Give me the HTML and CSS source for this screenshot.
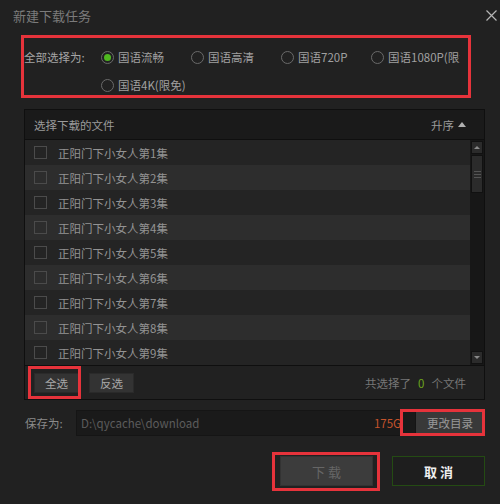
FILE: index.html
```html
<!DOCTYPE html>
<html lang="zh-CN">
<head>
    <meta charset="UTF-8">
    <meta name="viewport" content="width=device-width, initial-scale=1.0">
    <title>新建下载任务</title>
    <link rel="stylesheet" href="styles.css">
</head>
<body>

    <div class="titlebar">
        <span class="title">新建下载任务</span>
        <svg class="close" width="11" height="11" viewBox="0 0 11 11">
            <path d="M0.5 0.5 L10.5 10.5 M10.5 0.5 L0.5 10.5" stroke="#b5b5b5" stroke-width="1.2" fill="none"/>
        </svg>
    </div>

    <div class="quality">
        <span class="q-label">全部选择为:</span>
        <div class="q-options">
            <label class="radio checked"><i></i>国语流畅</label>
            <label class="radio"><i></i>国语高清</label>
            <label class="radio"><i></i>国语720P</label>
            <label class="radio"><i></i>国语1080P(限免)</label>
            <label class="radio"><i></i>国语4K(限免)</label>
        </div>
    </div>

    <div class="files">
        <div class="files-head">
            <span>选择下载的文件</span>
            <span class="sort">升序<i class="tri"></i></span>
        </div>
        <div class="files-body">
            <ul class="file-list">
                <li><i class="check"></i>正阳门下小女人第1集</li>
                <li><i class="check"></i>正阳门下小女人第2集</li>
                <li><i class="check"></i>正阳门下小女人第3集</li>
                <li><i class="check"></i>正阳门下小女人第4集</li>
                <li><i class="check"></i>正阳门下小女人第5集</li>
                <li><i class="check"></i>正阳门下小女人第6集</li>
                <li><i class="check"></i>正阳门下小女人第7集</li>
                <li><i class="check"></i>正阳门下小女人第8集</li>
                <li><i class="check"></i>正阳门下小女人第9集</li>
            </ul>
            <div class="scrollbar">
                <div class="sb-btn up"></div>
                <div class="sb-thumb"><i></i><i></i><i></i></div>
                <div class="sb-track"></div>
                <div class="sb-btn down"></div>
            </div>
        </div>
        <div class="files-foot">
            <button class="btn-small mark mark-all">全选</button>
            <button class="btn-small">反选</button>
            <span class="count">共选择了<em>0</em>个文件</span>
        </div>
    </div>

    <div class="save">
        <span class="save-label">保存为:</span>
        <div class="path">
            <span>D:\qycache\download</span>
            <span class="free">175G</span>
        </div>
        <button class="change mark mark-change">更改目录</button>
    </div>

    <div class="actions">
        <button class="dl mark mark-dl">下 载</button>
        <button class="cancel">取 消</button>
    </div>

</body>
</html>
```

FILE: styles.css
```css
*{
    margin: 0;
    padding: 0;
    box-sizing: border-box;
}
body{
    width: 500px;
    height: 504px;
    overflow: hidden;
    background-color: #212121;
    font-family: "Noto Sans CJK SC", "Noto Sans", sans-serif;
    font-size: 11.5px;
    color: #999;
}
button{
    font-family: inherit;
    font-size: inherit;
    cursor: pointer;
}

/* title bar */
.titlebar{
    height: 30px;
    display: flex;
    align-items: center;
    justify-content: space-between;
    padding: 0 3px 0 13px;
}
.title{
    font-size: 13px;
    color: #7b7b7b;
}

/* quality picker */
.quality{
    margin: 5px 0 0 21px;
    width: 450px;
    height: 63px;
    border: 3px solid #e6333b;
    display: flex;
    padding-top: 9px;
}
.q-label{
    width: 77px;
    line-height: 20px;
    color: #a5a5a5;
}
.q-options{
    display: grid;
    grid-template-columns: repeat(4, 90px);
    grid-auto-rows: 20px;
    row-gap: 8px;
    width: 359px;
    overflow: hidden;
}
.radio{
    display: flex;
    align-items: center;
    gap: 4px;
    white-space: nowrap;
    color: #a0a0a0;
}
.radio i{
    flex: none;
    width: 13px;
    height: 13px;
    border: 1px solid #6a6a6a;
    border-radius: 50%;
    display: flex;
    align-items: center;
    justify-content: center;
}
.radio.checked i::after{
    content: "";
    width: 7px;
    height: 7px;
    border-radius: 50%;
    background-color: #4fb81f;
}

/* file list */
.files{
    margin: 11px 0 0 24px;
    width: 461px;
    border: 1px solid #0f0f0f;
}
.files-head{
    height: 30px;
    border-bottom: 1px solid #0f0f0f;
    background-color: #1a1a1a;
    display: flex;
    align-items: center;
    justify-content: space-between;
    padding: 0 18px 0 9px;
    color: #9a9a9a;
}
.sort{
    display: flex;
    align-items: center;
    gap: 4px;
}
.tri{
    width: 0;
    height: 0;
    border-left: 4px solid transparent;
    border-right: 4px solid transparent;
    border-bottom: 5px solid #b0b0b0;
}
.files-body{
    display: flex;
    height: 225px;
}
.file-list{
    list-style: none;
    flex: 1;
}
.file-list li{
    height: 25px;
    display: flex;
    align-items: center;
    padding-left: 9px;
    background-color: #242424;
    color: #939393;
}
.file-list li:nth-child(even){
    background-color: #2d2d2d;
}
.check{
    width: 13px;
    height: 13px;
    border: 1px solid #4b4b4b;
    margin-right: 11px;
}
.scrollbar{
    width: 14px;
    background-color: #171717;
    display: flex;
    flex-direction: column;
    padding: 1px;
}
.sb-btn{
    height: 13px;
    background-color: #2b2b2b;
    border: 1px solid #111;
    display: flex;
    align-items: center;
    justify-content: center;
}
.sb-btn::after{
    content: "";
    border-left: 3px solid transparent;
    border-right: 3px solid transparent;
}
.sb-btn.up::after{
    border-bottom: 3px solid #8a8a8a;
}
.sb-btn.down::after{
    border-top: 3px solid #8a8a8a;
}
.sb-thumb{
    height: 38px;
    margin-top: 1px;
    background-color: #2b2b2b;
    border: 1px solid #111;
    display: flex;
    flex-direction: column;
    align-items: center;
    justify-content: center;
    gap: 2px;
}
.sb-thumb i{
    width: 7px;
    height: 1px;
    background-color: #555;
}
.sb-track{
    flex: 1;
}
.files-foot{
    height: 34px;
    border-top: 1px solid #0f0f0f;
    display: flex;
    align-items: center;
    gap: 10px;
    padding: 0 18px 0 9px;
}
.btn-small{
    width: 45px;
    height: 20px;
    background-color: #333;
    border: 1px solid #2a2a2a;
    color: #a8a8a8;
}
.count{
    margin-left: auto;
    color: #777;
}
.count em{
    font-style: normal;
    color: #6da51c;
    padding: 0 7px;
}

/* save path */
.save{
    display: flex;
    align-items: flex-start;
    margin: 10px 0 0 25px;
    height: 26px;
}
.save-label{
    width: 51px;
    line-height: 26px;
    color: #8a8a8a;
}
.path{
    width: 340px;
    height: 26px;
    background-color: #1a1a1a;
    border: 1px solid #151515;
    display: flex;
    align-items: center;
    padding-left: 4px;
    color: #5c5c5c;
}
.free{
    margin-left: auto;
    padding-right: 14px;
    color: #c4532b;
}
.change{
    width: 68px;
    height: 23px;
    margin-top: 1px;
    background-color: #393939;
    border: none;
    color: #9a9a9a;
}

/* bottom buttons */
.actions{
    display: flex;
    justify-content: flex-end;
    gap: 19px;
    margin-top: 20px;
    padding-right: 15px;
}
.dl, .cancel{
    width: 93px;
    height: 30px;
    font-size: 13px;
}
.dl{
    background-color: #3c3c3c;
    border: 1px solid #333;
    color: #666;
}
.cancel{
    background-color: #1e1e1e;
    border: 1px solid #244b13;
    color: #eee;
    font-weight: bold;
}

/* red annotation frames */
.mark{
    position: relative;
}
.mark::after{
    content: "";
    position: absolute;
    border: 3px solid #e6333b;
    pointer-events: none;
}
.mark-all::after{
    top: -8px;
    bottom: -7px;
    left: -7px;
    right: -3px;
}
.mark-change::after{
    top: -2px;
    bottom: -2px;
    left: -16px;
    right: -1px;
}
.mark-dl::after{
    top: -5px;
    bottom: -6px;
    left: -9px;
    right: -8px;
}
```
